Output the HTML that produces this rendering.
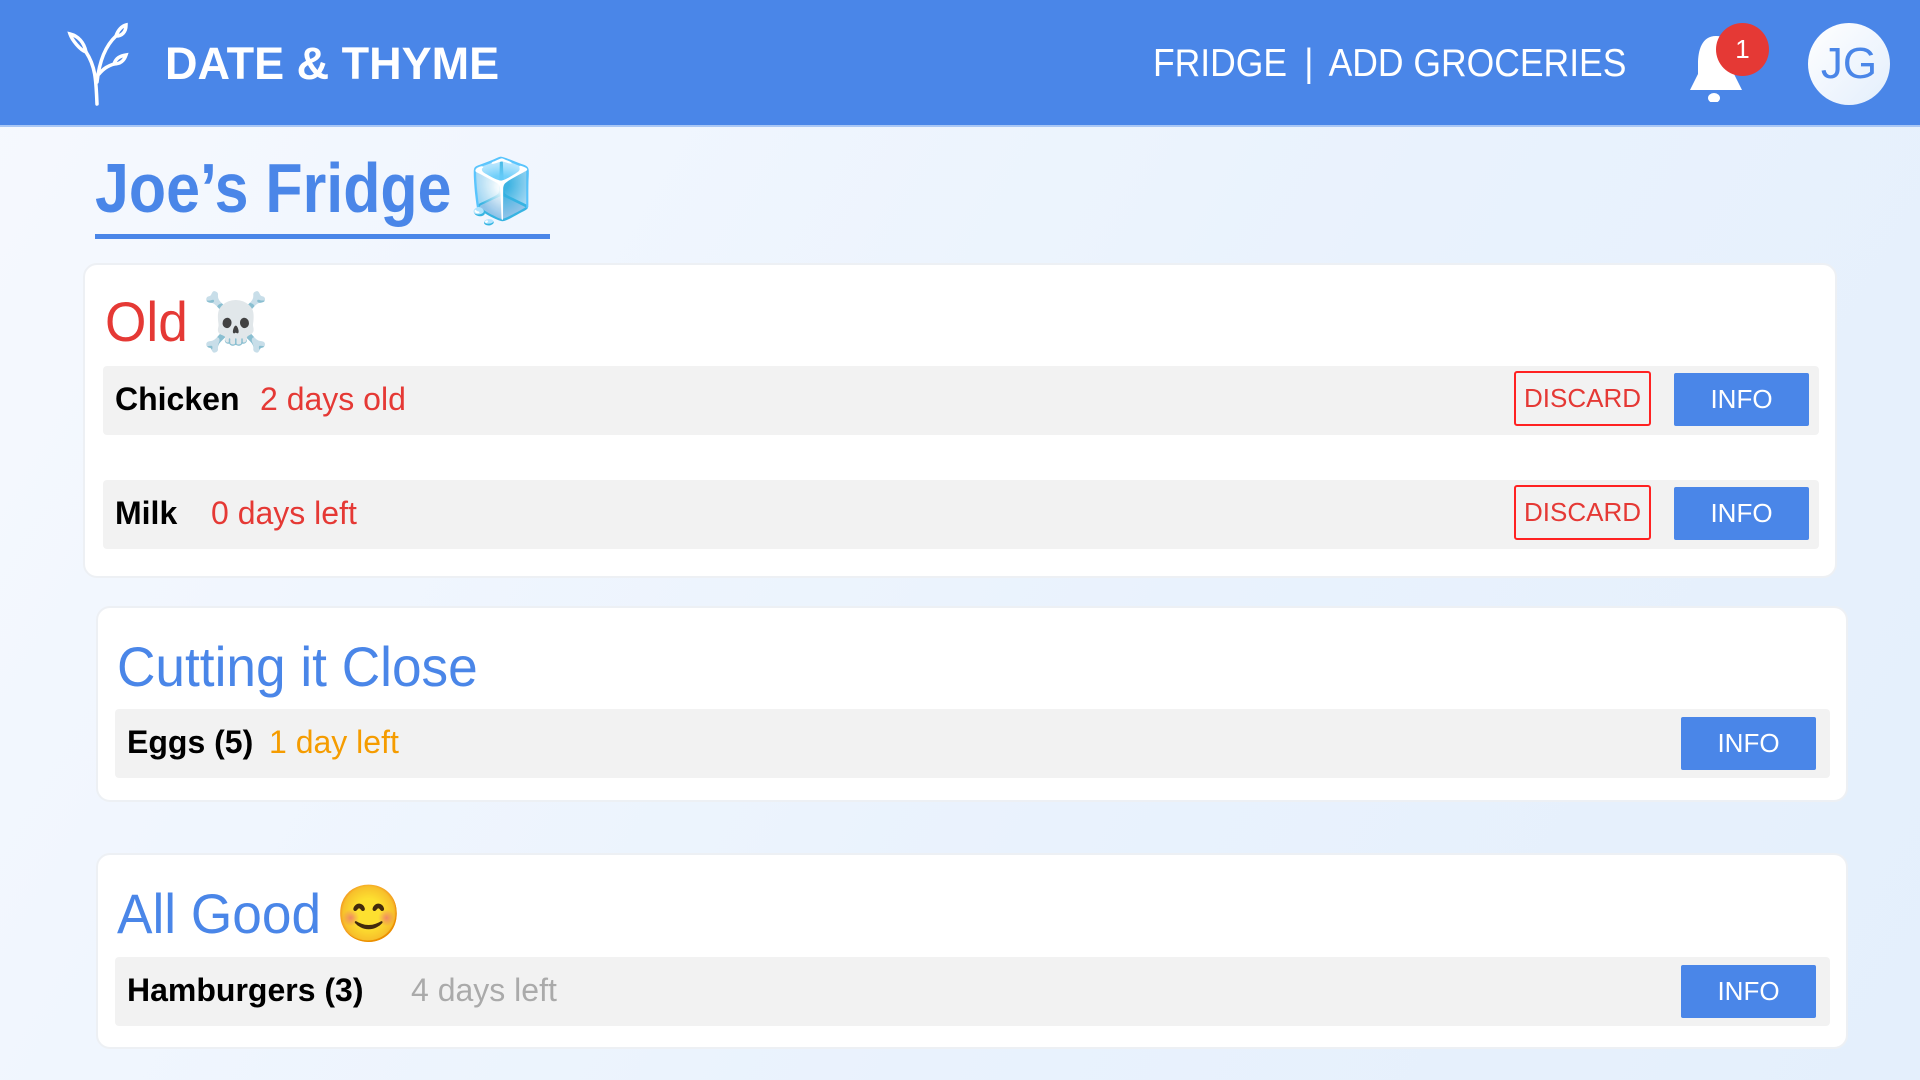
<!DOCTYPE html>
<html><head><meta charset="utf-8"><style>
*{margin:0;padding:0;box-sizing:border-box}
body{width:1920px;height:1080px;overflow:hidden;font-family:"Liberation Sans","Noto Sans CJK JP",sans-serif;background:linear-gradient(120deg,#f6f9fe 0%,#e9f2fd 60%,#e4effc 100%);position:relative}
.hdr{position:absolute;left:0;top:0;width:1920px;height:127px;background:#4a86e8;border-bottom:2px solid #a9c7f5}
.abs{position:absolute;white-space:nowrap}
.card{position:absolute;background:#fff;border:2px solid #edf0f4;border-radius:14px}
.row{position:absolute;background:#f2f2f2;border-radius:4px}
.name{position:absolute;font-weight:bold;font-size:32px;color:#000;top:15px}
.st{position:absolute;font-size:32px;top:15px}
.disc{position:absolute;width:137px;height:55px;border:2px solid #f22;border-radius:3px;color:#e53935;font-size:26px;text-align:center;line-height:51px}
.info{position:absolute;width:135px;height:53px;background:#4a86e8;border-radius:2px;color:#fff;font-size:26px;text-align:center;line-height:53px}
h2{position:absolute;font-weight:normal;font-size:56px;white-space:nowrap;transform-origin:left center}
</style></head><body>
<div class="hdr">
<svg class="abs" style="left:66px;top:22px" width="70" height="84" viewBox="0 0 70 84" fill="none" stroke="#fff" stroke-width="3.5" stroke-linecap="round">
<path d="M31 82 C30 60 30 45 20 30"/><path d="M31 60 C33 42 38 25 50 14"/><path d="M33 52 C38 46 42 44 48 42"/>
<path d="M20 30 C14 28 6 18 4 12 C12 14 18 20 20 30Z"/><path d="M50 14 C52 8 56 4 60 3 C60 10 56 14 50 14Z"/><path d="M48 42 C50 36 54 34 60 33 C58 39 54 42 48 42Z"/>
</svg>
<div class="abs" style="left:165px;top:38px;font-size:45px;font-weight:bold;color:#fff">DATE &amp; THYME</div>
<div class="abs" style="left:1153px;top:42px;font-size:39px;color:#fff;transform:scaleX(0.91);transform-origin:left center">FRIDGE <span style="margin:0 8px;font-weight:100">|</span> ADD GROCERIES</div>
<svg class="abs" style="left:1686px;top:30px" width="60" height="72" viewBox="0 0 60 72"><path d="M30 6 C16 6 12 20 12 34 L12 44 L4 60 L56 60 L48 44 L48 34 C48 20 44 6 30 6Z" fill="#fff"/><ellipse cx="28" cy="68" rx="6" ry="5" fill="#fff"/></svg>
<div class="abs" style="left:1716px;top:23px;width:53px;height:53px;border-radius:50%;background:#e53935;color:#fff;font-size:26px;text-align:center;line-height:53px">1</div>
<div class="abs" style="left:1808px;top:23px;width:82px;height:82px;border-radius:50%;background:linear-gradient(135deg,#fff,#e3eefc);color:#4a86e8;font-size:44px;text-align:center;line-height:82px">JG</div>
</div>

<div class="abs" style="left:95px;top:148px;font-size:70px;font-weight:bold;color:#4a86e8;transform:scaleX(0.87);transform-origin:left center">Joe’s Fridge <span style="font-size:62px">🧊</span></div>
<div class="abs" style="left:95px;top:234px;width:455px;height:5px;background:#4a86e8"></div>

<div class="card" style="left:83px;top:263px;width:1754px;height:315px">
<h2 style="left:20px;top:24px;color:#e53935;transform:scaleX(0.95)">Old <span style="font-size:56px">☠️</span></h2>
<div class="row" style="left:18px;top:101px;width:1716px;height:69px">
<div class="name" style="left:12px">Chicken</div><div class="st" style="left:157px;color:#e53935">2 days old</div>
<div class="disc" style="left:1411px;top:5px">DISCARD</div><div class="info" style="left:1571px;top:7px">INFO</div></div>
<div class="row" style="left:18px;top:215px;width:1716px;height:69px">
<div class="name" style="left:12px">Milk</div><div class="st" style="left:108px;color:#e53935">0 days left</div>
<div class="disc" style="left:1411px;top:5px">DISCARD</div><div class="info" style="left:1571px;top:7px">INFO</div></div>
</div>

<div class="card" style="left:96px;top:606px;width:1752px;height:196px">
<h2 style="left:19px;top:26px;color:#4a86e8;transform:scaleX(0.95)">Cutting it Close</h2>
<div class="row" style="left:17px;top:101px;width:1715px;height:69px">
<div class="name" style="left:12px">Eggs (5)</div><div class="st" style="left:154px;color:#f59c00">1 day left</div>
<div class="info" style="left:1566px;top:8px">INFO</div></div>
</div>

<div class="card" style="left:96px;top:853px;width:1752px;height:196px">
<h2 style="left:19px;top:26px;color:#4a86e8;transform:scaleX(0.95)">All Good <span>😊</span></h2>
<div class="row" style="left:17px;top:102px;width:1715px;height:69px">
<div class="name" style="left:12px">Hamburgers (3)</div><div class="st" style="left:296px;color:#aaa">4 days left</div>
<div class="info" style="left:1566px;top:8px">INFO</div></div>
</div>
</body></html>
